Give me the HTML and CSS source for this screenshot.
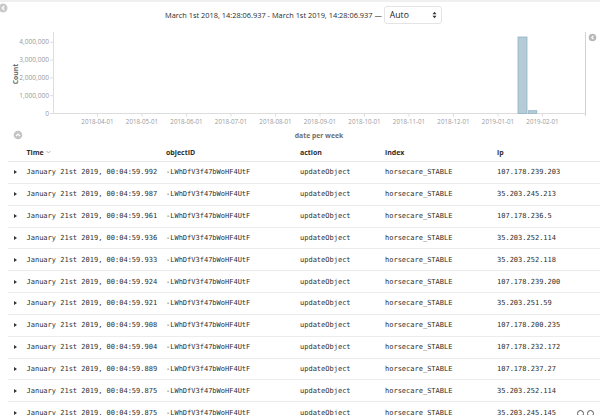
FILE: index.html
```html
<!DOCTYPE html>
<html>
<head>
<meta charset="utf-8">
<link rel="stylesheet" href="styles.css">
</head>
<body>
<div class="page">
  <div class="topbar"></div>
  <svg class="collapse-left" width="10" height="12" viewBox="0 0 10 12">
    <circle cx="3" cy="6" r="4.5" fill="#c9c9c9"/>
    <path d="M4.2 4 L2.3 6 L4.2 8" stroke="#fff" stroke-width="1.3" fill="none"/>
  </svg>
  <div class="header">
    <span class="range">March 1st 2018, 14:28:06.937 - March 1st 2019, 14:28:06.937 —</span>
    <div class="select">
      <span>Auto</span>
      <svg class="updown" width="5" height="8" viewBox="0 0 5 8">
        <path d="M0.5 3.2 L2.5 0.8 L4.5 3.2 Z M0.5 4.8 L2.5 7.2 L4.5 4.8 Z" fill="#333"/>
      </svg>
    </div>
  </div>
  <svg class="chart" width="600" height="102" viewBox="0 24 600 102">
    <g class="grid">
      <line x1="53.5" y1="30" x2="53.5" y2="111.5" stroke="#ddd" stroke-width="1"/>
      <line x1="53.5" y1="111.5" x2="585" y2="111.5" stroke="#ddd" stroke-width="1"/>
      <line x1="50" y1="111.5" x2="53.5" y2="111.5" stroke="#ddd"/>
      <line x1="50" y1="93.7" x2="53.5" y2="93.7" stroke="#ddd"/>
      <line x1="50" y1="75.9" x2="53.5" y2="75.9" stroke="#ddd"/>
      <line x1="50" y1="58.1" x2="53.5" y2="58.1" stroke="#ddd"/>
      <line x1="50" y1="40.3" x2="53.5" y2="40.3" stroke="#ddd"/>
      <line x1="97.5" y1="111.5" x2="97.5" y2="114.5" stroke="#ddd"/>
      <line x1="142" y1="111.5" x2="142" y2="114.5" stroke="#ddd"/>
      <line x1="186.5" y1="111.5" x2="186.5" y2="114.5" stroke="#ddd"/>
      <line x1="231" y1="111.5" x2="231" y2="114.5" stroke="#ddd"/>
      <line x1="275.5" y1="111.5" x2="275.5" y2="114.5" stroke="#ddd"/>
      <line x1="320" y1="111.5" x2="320" y2="114.5" stroke="#ddd"/>
      <line x1="364.5" y1="111.5" x2="364.5" y2="114.5" stroke="#ddd"/>
      <line x1="409" y1="111.5" x2="409" y2="114.5" stroke="#ddd"/>
      <line x1="453.5" y1="111.5" x2="453.5" y2="114.5" stroke="#ddd"/>
      <line x1="498" y1="111.5" x2="498" y2="114.5" stroke="#ddd"/>
      <line x1="542.5" y1="111.5" x2="542.5" y2="114.5" stroke="#ddd"/>
    </g>
    <line x1="585.5" y1="30" x2="585.5" y2="114" stroke="#efc6c6" stroke-width="1"/>
    <g class="ylabels">
      <text x="49" y="113.5">0</text>
      <text x="49" y="95.7">1,000,000</text>
      <text x="49" y="77.9">2,000,000</text>
      <text x="49" y="60.1">3,000,000</text>
      <text x="49" y="42.3">4,000,000</text>
    </g>
    <g class="xlabels">
      <text x="97.5" y="121.5">2018-04-01</text>
      <text x="142" y="121.5">2018-05-01</text>
      <text x="186.5" y="121.5">2018-06-01</text>
      <text x="231" y="121.5">2018-07-01</text>
      <text x="275.5" y="121.5">2018-08-01</text>
      <text x="320" y="121.5">2018-09-01</text>
      <text x="364.5" y="121.5">2018-10-01</text>
      <text x="409" y="121.5">2018-11-01</text>
      <text x="453.5" y="121.5">2018-12-01</text>
      <text x="498" y="121.5">2019-01-01</text>
      <text x="542.5" y="121.5">2019-02-01</text>
    </g>
    <text class="axis-title" transform="translate(17.5 72) rotate(-90)">Count</text>
    <rect x="518" y="35" width="9" height="76.5" fill="#b5cbd6" stroke="#93b3c3" stroke-width="0.8"/>
    <rect x="528.3" y="108.7" width="8.5" height="2.8" fill="#b5cbd6" stroke="#93b3c3" stroke-width="0.8"/>
    <circle cx="592.5" cy="35.5" r="3.8" fill="#b9b9b9"/>
    <path d="M593.4 33.8 L591.7 35.5 L593.4 37.2" stroke="#fff" stroke-width="1.1" fill="none"/>
  </svg>
  <div class="xtitle-row">
    <svg class="toggle" width="10" height="10" viewBox="0 0 10 10">
      <circle cx="5" cy="5" r="4.3" fill="#c4c4c4"/>
      <path d="M3 6 L5 4 L7 6" stroke="#fff" stroke-width="1.2" fill="none"/>
    </svg>
    <span class="xtitle">date per week</span>
  </div>
  <div class="table">
    <div class="row head">
      <span></span>
      <span class="th">Time <svg class="sort" width="5" height="4" viewBox="0 0 5 4"><path d="M0.6 1 L2.5 3 L4.4 1" stroke="#aaa" stroke-width="0.9" fill="none"/></svg></span>
      <span class="th">objectID</span>
      <span class="th">action</span>
      <span class="th">index</span>
      <span class="th">ip</span>
    </div>
    <div class="row"><span class="caret"></span><span>January 21st 2019, 00:04:59.992</span><span>-LWhDfV3f47bWoHF4UtF</span><span>updateObject</span><span>horsecare_STABLE</span><span>107.178.239.203</span></div>
    <div class="row"><span class="caret"></span><span>January 21st 2019, 00:04:59.987</span><span>-LWhDfV3f47bWoHF4UtF</span><span>updateObject</span><span>horsecare_STABLE</span><span>35.203.245.213</span></div>
    <div class="row"><span class="caret"></span><span>January 21st 2019, 00:04:59.961</span><span>-LWhDfV3f47bWoHF4UtF</span><span>updateObject</span><span>horsecare_STABLE</span><span>107.178.236.5</span></div>
    <div class="row"><span class="caret"></span><span>January 21st 2019, 00:04:59.936</span><span>-LWhDfV3f47bWoHF4UtF</span><span>updateObject</span><span>horsecare_STABLE</span><span>35.203.252.114</span></div>
    <div class="row"><span class="caret"></span><span>January 21st 2019, 00:04:59.933</span><span>-LWhDfV3f47bWoHF4UtF</span><span>updateObject</span><span>horsecare_STABLE</span><span>35.203.252.118</span></div>
    <div class="row"><span class="caret"></span><span>January 21st 2019, 00:04:59.924</span><span>-LWhDfV3f47bWoHF4UtF</span><span>updateObject</span><span>horsecare_STABLE</span><span>107.178.239.200</span></div>
    <div class="row"><span class="caret"></span><span>January 21st 2019, 00:04:59.921</span><span>-LWhDfV3f47bWoHF4UtF</span><span>updateObject</span><span>horsecare_STABLE</span><span>35.203.251.59</span></div>
    <div class="row"><span class="caret"></span><span>January 21st 2019, 00:04:59.908</span><span>-LWhDfV3f47bWoHF4UtF</span><span>updateObject</span><span>horsecare_STABLE</span><span>107.178.200.235</span></div>
    <div class="row"><span class="caret"></span><span>January 21st 2019, 00:04:59.904</span><span>-LWhDfV3f47bWoHF4UtF</span><span>updateObject</span><span>horsecare_STABLE</span><span>107.178.232.172</span></div>
    <div class="row"><span class="caret"></span><span>January 21st 2019, 00:04:59.889</span><span>-LWhDfV3f47bWoHF4UtF</span><span>updateObject</span><span>horsecare_STABLE</span><span>107.178.237.27</span></div>
    <div class="row"><span class="caret"></span><span>January 21st 2019, 00:04:59.875</span><span>-LWhDfV3f47bWoHF4UtF</span><span>updateObject</span><span>horsecare_STABLE</span><span>35.203.252.114</span></div>
    <div class="row"><span class="caret"></span><span>January 21st 2019, 00:04:59.875</span><span>-LWhDfV3f47bWoHF4UtF</span><span>updateObject</span><span>horsecare_STABLE</span><span>35.203.245.145</span></div>
  </div>
  <div class="pager">
    <span class="pdot"></span>
    <span class="pdot"></span>
  </div>
</div>
</body>
</html>
```

FILE: styles.css
```css
html, body {
  margin: 0;
  padding: 0;
  background: #fff;
}

.page {
  position: relative;
  width: 600px;
  height: 415px;
  overflow: hidden;
  font-family: "Open Sans", "Liberation Sans", sans-serif;
  color: #333;
}

.topbar {
  height: 2px;
  background: #efefef;
}

.collapse-left {
  position: absolute;
  left: 0;
  top: 2px;
}

.header {
  display: flex;
  align-items: center;
  gap: 2px;
  padding-left: 165px;
  height: 22px;
  padding-top: 2px;
}

.range {
  font-size: 7.4px;
  color: #2a2a2a;
  white-space: nowrap;
}

.select {
  box-sizing: border-box;
  width: 58px;
  height: 18px;
  border: 1px solid #e4e4e4;
  border-radius: 3px;
  display: flex;
  align-items: center;
  justify-content: space-between;
  padding: 0 4px 0 5px;
  font-size: 8.6px;
  color: #222;
}

.updown {
  display: block;
}

.chart {
  display: block;
}

.chart text {
  font-family: "Open Sans", "Liberation Sans", sans-serif;
}

.ylabels text {
  font-size: 6.6px;
  fill: #9a9a9a;
  text-anchor: end;
}

.xlabels text {
  font-size: 6.2px;
  fill: #9a9a9a;
  text-anchor: middle;
}

.axis-title {
  font-size: 6.8px;
  font-weight: 700;
  fill: #6a6a6a;
  text-anchor: middle;
}

.xtitle-row {
  display: grid;
  grid-template-columns: 53px 532px 15px;
  align-items: center;
  height: 14px;
}

.toggle {
  display: block;
  margin-left: 13px;
}

.xtitle {
  text-align: center;
  font-size: 6.8px;
  font-weight: 700;
  color: #707070;
}

.table {
  margin-left: 8px;
  margin-top: 1.5px;
}

.row {
  display: grid;
  grid-template-columns: 18.5px 139.5px 134px 85px 112px 1fr;
  align-items: center;
  box-sizing: border-box;
  height: 21.85px;
  border-bottom: 1px solid #ececec;
  font-family: "DejaVu Sans Mono", "Liberation Mono", monospace;
  font-size: 7px;
  color: #2e2e2e;
  white-space: nowrap;
}

.row.head {
  height: 18.5px;
  font-family: "Open Sans", "Liberation Sans", sans-serif;
  font-size: 7px;
  font-weight: 700;
  color: #2d2d2d;
  border-bottom-color: #e6e6e6;
}

.th {
  display: flex;
  align-items: center;
  gap: 2px;
}

.sort {
  display: block;
}

.caret {
  width: 0;
  height: 0;
  margin-left: 5.5px;
  border-left: 3px solid #333;
  border-top: 2px solid transparent;
  border-bottom: 2px solid transparent;
}

.pager {
  position: absolute;
  right: 6px;
  top: 410px;
  display: flex;
  gap: 3px;
}

.pdot {
  width: 5px;
  height: 5px;
  border: 1px solid #555;
  border-radius: 50%;
}
```
